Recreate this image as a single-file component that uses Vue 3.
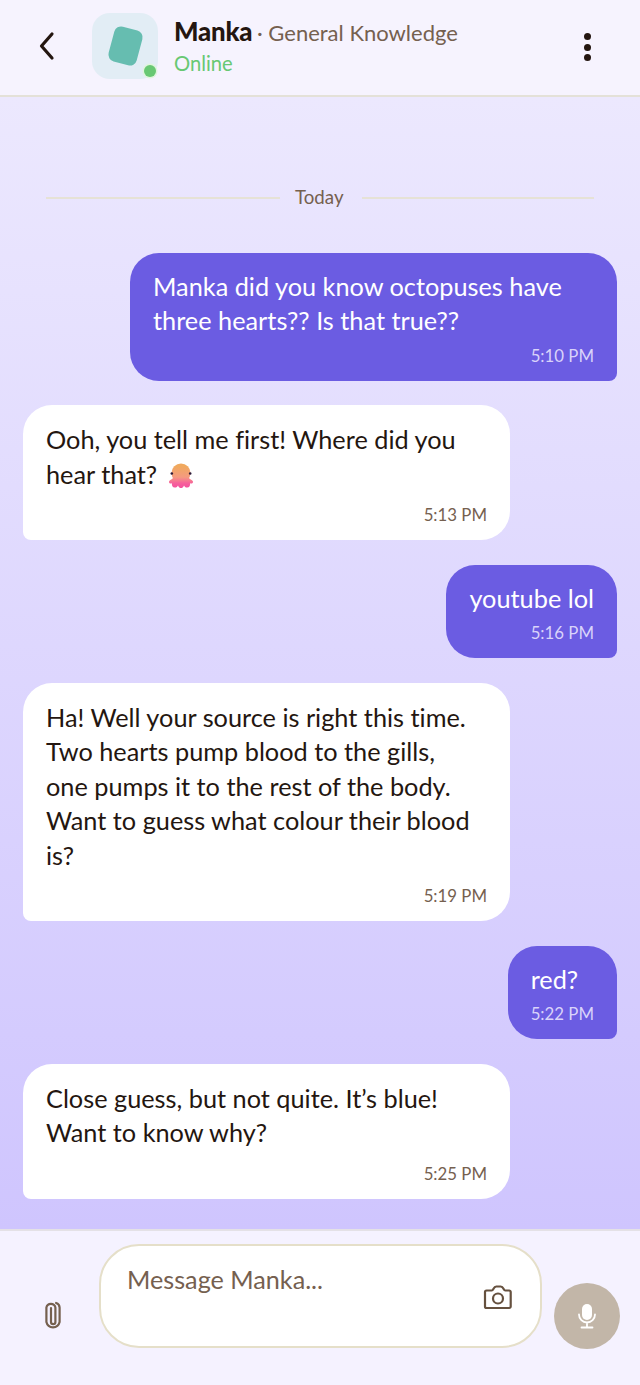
<script setup>
const messages = [
  { id: 1, from: 'me', wide: true, lines: ['Manka did you know octopuses have', 'three hearts?? Is that true??'], time: '5:10 PM' },
  { id: 2, from: 'bot', lines: ['Ooh, you tell me first! Where did you', 'hear that?'], time: '5:13 PM', octopus: true },
  { id: 3, from: 'me', lines: ['youtube lol'], time: '5:16 PM' },
  { id: 4, from: 'bot', lines: ['Ha! Well your source is right this time.', 'Two hearts pump blood to the gills,', 'one pumps it to the rest of the body.', 'Want to guess what colour their blood', 'is?'], time: '5:19 PM' },
  { id: 5, from: 'me', lines: ['red?'], time: '5:22 PM' },
  { id: 6, from: 'bot', lines: ['Close guess, but not quite. It’s blue!', 'Want to know why?'], time: '5:25 PM' },
]
</script>

<template>
  <div class="screen">
    <header class="header">
      <svg class="back" width="18" height="30" viewBox="0 0 18 30"><path d="M14 3 L3.500 15 L14 27" fill="none" stroke="#241610" stroke-width="3.200" stroke-linecap="round" stroke-linejoin="round"/></svg>
      <div class="avatar">
        <div class="tile"></div>
        <span class="dot"></span>
      </div>
      <div class="who">
        <div class="title"><b>Manka</b><span class="sub"> · General Knowledge</span></div>
        <div class="online">Online</div>
      </div>
      <div class="menu"><i></i><i></i><i></i></div>
    </header>

    <main class="chat">
      <div class="day"><span class="rule left"></span><span class="day-label">Today</span><span class="rule"></span></div>
      <div v-for="m in messages" :key="m.id" class="msg" :class="[m.from, { wide: m.wide }]">
        <div class="text">
          <div v-for="(l, i) in m.lines" :key="i">{{ l }}<svg v-if="m.octopus && i === m.lines.length - 1" class="octo" width="26" height="26" viewBox="0 0 26 26">
            <defs><linearGradient id="og" gradientUnits="userSpaceOnUse" x1="13" y1="1" x2="13" y2="25"><stop offset="0.1" stop-color="#f0a95e"/><stop offset="0.55" stop-color="#f59a80"/><stop offset="0.8" stop-color="#f6609c"/><stop offset="1" stop-color="#f4509c"/></linearGradient></defs>
            <g fill="url(#og)">
              <circle cx="13" cy="10" r="9.500"/>
              <path d="M5 15 C4 17 1.500 16.500 1 18.500 C.6 20.200 2.500 21 4 20.300 C3.500 22.500 4.600 24.600 6.800 24.600 C8.600 24.600 9.400 23.600 10 22.500 C10.800 24.400 11.800 25 13 25 C14.200 25 15.200 24.400 16 22.500 C16.600 23.600 17.400 24.600 19.200 24.600 C21.400 24.600 22.500 22.500 22 20.300 C23.500 21 25.400 20.200 25 18.500 C24.500 16.500 22 17 21 15 Z"/>
            </g>
            <circle cx="3.800" cy="10.500" r="1.300" fill="#2a1a3a"/><circle cx="22.200" cy="10.500" r="1.300" fill="#2a1a3a"/>
          </svg></div>
        </div>
        <div class="time">{{ m.time }}</div>
      </div>
    </main>

    <footer class="composer">
      <svg class="clip" width="20" height="30" viewBox="0 0 20 30"><path d="M8 7 V21 a2.200 2.200 0 0 0 4.400 0 V6.500 a4.600 4.600 0 0 0 -9 0 V21 a6.800 7 0 0 0 13.200 0 V6.500 a5 5 0 0 0 -3.500 -4.500" fill="none" stroke="#75604f" stroke-width="2.200" stroke-linecap="round"/></svg>
      <div class="input">
        <span class="placeholder">Message Manka...</span>
        <svg class="camera" width="30" height="26" viewBox="0 0 30 26"><path d="M3.500 6.500h5.200c1 0 1.300-.8 1.800-1.800.6-1.200 1.300-2.200 2.800-2.200h4.400c1.500 0 2.200 1 2.800 2.200.5 1 .8 1.800 1.800 1.800h3.900a1.500 1.500 0 0 1 1.500 1.500v14.500a1.500 1.500 0 0 1-1.500 1.500H3.500A1.500 1.500 0 0 1 2 22.500V8a1.500 1.500 0 0 1 1.500-1.500z" fill="none" stroke="#66513f" stroke-width="2.200" stroke-linejoin="round"/><circle cx="15" cy="14.500" r="5" fill="none" stroke="#66513f" stroke-width="2.200"/></svg>
      </div>
      <div class="mic">
        <svg width="20" height="26" viewBox="0 0 20 26"><rect x="5" y="1" width="10" height="16" rx="5" fill="#fff"/><path d="M2 11.500 a8 8 0 0 0 16 0 M10 19.500 V24 M4.500 24.500 H15.500" fill="none" stroke="#fff" stroke-width="1.800" stroke-linecap="round"/></svg>
      </div>
    </footer>
  </div>
</template>

<style scoped>
.screen {
  width: 640px;
  height: 1385px;
  display: flex;
  flex-direction: column;
  font-family: "Lato", "Noto Sans", sans-serif;
  font-variant-ligatures: none;
  color: #241610;
  overflow: hidden;
}
.header {
  height: 95px;
  flex: none;
  border-bottom: 2px solid #e4e1d8;
  background: #f6f3fe;
  display: flex;
  align-items: flex-start;
  padding-left: 38px;
  padding-right: 49px;
}
.back { margin-top: 31px; flex: none; }
.avatar {
  position: relative;
  width: 66px;
  height: 66px;
  margin: 13px 16px 0 36px;
  border-radius: 18px;
  background: #e2edf5;
  flex: none;
  display: flex;
  align-items: center;
  justify-content: center;
}
.tile {
  width: 29px;
  height: 36px;
  border-radius: 7px;
  background: #66bdb0;
  transform: rotate(15deg);
}
.dot {
  position: absolute;
  right: 2px;
  bottom: 2px;
  width: 12px;
  height: 12px;
  border-radius: 50%;
  background: #68c873;
  box-shadow: 0 0 0 1.500px #dff5dc;
}
.who { flex: 1; padding-top: 15px; }
.title { font-size: 22px; line-height: 32px; white-space: nowrap; }
.title b { font-weight: 900; font-size: 25.800px; letter-spacing: -0.2px; }
.sub { color: #75604f; margin-left: -1px; }
.online { color: #68c873; font-size: 20.200px; line-height: 28px; }
.menu { display: flex; flex-direction: column; gap: 3.500px; margin-top: 33px; }
.menu i { display: block; width: 7px; height: 7px; border-radius: 50%; background: #241610; }

.chat {
  flex: 1;
  min-height: 0;
  background: linear-gradient(180deg, #ece8fe 0%, #cfc5fe 100%);
  padding: 86px 23px 0;
  display: flex;
  flex-direction: column;
  gap: 24.500px;
}
.day {
  display: flex;
  align-items: center;
  gap: 15px;
  height: 28px;
  padding: 0 23px;
  margin-bottom: 17.300px;
}
.rule { flex: 1; height: 2px; background: #e6e2d6; margin-top: 2px; }
.rule.left { flex: 0 0 234px; }
.day-label { font-size: 18.700px; color: #75604f; margin-right: 3px; }

.msg { box-sizing: border-box; }
.msg.me {
  align-self: flex-end;
  background: #6b5ce2;
  color: #fff;
  border-radius: 29px 29px 8px 29px;
  padding: 16px 23px 14px;
}
.msg.me.wide { width: 487px; }
.msg.bot {
  align-self: flex-start;
  width: 487px;
  background: #fff;
  border-radius: 29px 29px 29px 8px;
  padding: 17px 23px 14px;
}
.text { font-size: 25.300px; line-height: 34.500px; white-space: nowrap; }
.time { font-size: 16.800px; line-height: 22px; text-align: right; margin-top: 7px; }
.msg.me .time { color: #d9d3fa; }
.msg.bot .time { color: #75604f; margin-top: 13px; }
.octo { vertical-align: -5px; margin-left: 11px; }

.composer {
  height: 156px;
  flex: none;
  box-sizing: border-box;
  border-top: 2px solid #e4e1e6;
  background: #f5f2ff;
  padding: 13px 20px 36px 43px;
  display: flex;
  align-items: flex-end;
}
.clip { flex: none; margin-bottom: 18px; }
.input {
  box-sizing: border-box;
  width: 443px;
  height: 104px;
  margin: 0 0 1px 36px;
  background: #fff;
  border: 2px solid #e5dfc9;
  border-radius: 40px;
  padding: 18px 26px 0;
  position: relative;
  font-size: 25.200px;
  color: #75604f;
  flex: none;
}
.camera { position: absolute; right: 27px; bottom: 36px; }
.mic {
  margin-left: auto;
  width: 66px;
  height: 66px;
  border-radius: 50%;
  background: #c2b6a8;
  display: flex;
  align-items: center;
  justify-content: center;
  flex: none;
}
</style>
